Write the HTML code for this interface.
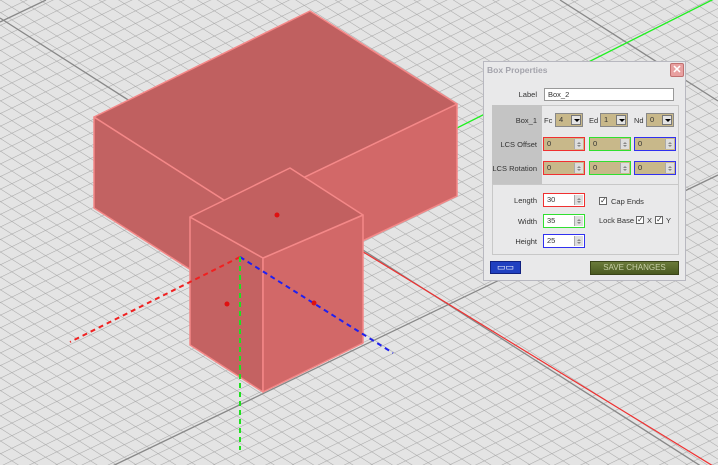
<!DOCTYPE html>
<html><head><meta charset="utf-8"><style>
*{margin:0;padding:0;box-sizing:border-box}
body{width:718px;height:465px;overflow:hidden;background:#e4e4e4;font-family:"Liberation Sans",sans-serif;position:relative}
svg.bg{position:absolute;left:0;top:0}
.dlg{position:absolute;left:483px;top:61px;width:203px;height:220px;background:#e9e9ea;border:1px solid #b8b8c0;font-size:7.5px;color:#333}
.t{position:absolute;white-space:nowrap}
.rt{position:absolute;white-space:nowrap;text-align:right;width:60px}
.ttl{left:3px;top:3px;font-size:8.5px;font-weight:bold;color:#a4a4ac}
.x{position:absolute;left:186px;top:1px;width:14px;height:14px;background:#e8a0a0;border:1px solid #c07070;border-radius:2px;color:#fff;font-size:11px;line-height:12px;text-align:center;font-weight:bold}
.in{position:absolute;background:#fff;border:1px solid #999;height:13px;font-size:7.5px;line-height:11px;padding-left:3px}
.sp{position:absolute;height:14px;background:#c8b88a;border:1px solid #888;font-size:7.5px;line-height:12px;padding-left:3px}
.sp.w{background:#fff}
.sp i{position:absolute;right:1px;top:1px;width:9px;height:10px;background:#ddd;border-left:1px solid #aaa}
.sp i:before{content:"";position:absolute;left:2px;top:1px;border:2px solid transparent;border-bottom:2px solid #888}
.sp i:after{content:"";position:absolute;left:2px;top:6px;border:2px solid transparent;border-top:2px solid #888}
.sel i{background:#e4e4e4;border:1px solid #777;width:10px}
.sel i:before{display:none}
.sel i:after{left:2px;top:3px;border:3px solid transparent;border-top:3px solid #000}
.r{border:1px solid #f03030}.g{border:1px solid #30e030}.b{border:1px solid #3030f0}
.cb{position:absolute;width:8px;height:8px;border:1px solid #666;background:#fff;font-size:8px;line-height:6px;text-align:center}
</style></head><body>
<svg class="bg" width="718" height="465">
<defs><pattern id="gp" width="12.5" height="12.5" patternUnits="userSpaceOnUse" patternTransform="matrix(0.9,0.576,0.9,-0.432,0,0)">
<path d="M0 0H12.5M0 0V12.5" stroke="#a8a8a8" stroke-width="1.2" fill="none"/></pattern></defs>
<rect width="718" height="465" fill="#e4e4e4"/>
<rect width="718" height="465" fill="url(#gp)"/>
<g stroke="#888" stroke-width="1.3">
<line x1="0" y1="18" x2="718" y2="477"/><line x1="560" y1="0" x2="718" y2="101"/>
<line x1="0" y1="22" x2="46" y2="0"/><line x1="0" y1="520" x2="718" y2="175"/>
</g>
<line x1="457" y1="128" x2="718" y2="-3" stroke="#20f020" stroke-width="1.3"/>
<line x1="360" y1="250" x2="718" y2="469" stroke="#f03030" stroke-width="1.2"/>
<g stroke="#f48888" stroke-width="1.5" stroke-linejoin="round">
<polygon points="94,117 238,209 238,300 94,208" fill="#c26262"/>
<polygon points="238,209 457,104 457,196 238,300" fill="#d26868"/>
<polygon points="94,117 310,11 457,104 238,209" fill="#c06060"/>
<polygon points="190,217 263,258 263,392 190,345" fill="#c46262"/>
<polygon points="263,258 363,215 363,343 263,392" fill="#d26868"/>
<polygon points="190,217 290,168 363,215 263,258" fill="#c26060"/>
</g>
<g stroke-width="2" stroke-dasharray="5,4" fill="none">
<line x1="240" y1="257" x2="70" y2="342" stroke="#f02020"/>
<line x1="240" y1="257" x2="393" y2="353" stroke="#2020f0"/>
<line x1="240" y1="257" x2="240" y2="450" stroke="#20e020"/>
</g>
<g fill="#e01010"><circle cx="277" cy="215" r="2.5"/><circle cx="227" cy="304" r="2.5"/><circle cx="314" cy="303" r="2.5"/></g>
</svg>
<div class="dlg">
<div class="t ttl">Box Properties</div><div class="x">✕</div>
<div class="rt" style="left:-7px;top:28px">Label</div>
<div class="in" style="left:60px;top:26px;width:130px">Box_2</div>
<div style="position:absolute;left:8px;top:43px;width:187px;height:150px;border:1px solid #c8c8c8"></div>
<div style="position:absolute;left:8px;top:43px;width:50px;height:79px;background:#c4c4c4"></div>
<div style="position:absolute;left:8px;top:122px;width:187px;height:1px;background:#c8c8c8"></div>
<div class="rt" style="left:-7px;top:54px">Box_1</div>
<div class="t" style="left:60px;top:54px">Fc</div>
<div class="sp sel" style="left:71px;top:51px;width:28px">4<i></i></div>
<div class="t" style="left:105px;top:54px">Ed</div>
<div class="sp sel" style="left:116px;top:51px;width:28px">1<i></i></div>
<div class="t" style="left:150px;top:54px">Nd</div>
<div class="sp sel" style="left:162px;top:51px;width:28px">0<i></i></div>
<div class="rt" style="left:-7px;top:78px">LCS Offset</div>
<div class="sp r" style="left:59px;top:75px;width:42px">0<i></i></div>
<div class="sp g" style="left:105px;top:75px;width:42px">0<i></i></div>
<div class="sp b" style="left:150px;top:75px;width:42px">0<i></i></div>
<div class="rt" style="left:-7px;top:102px">LCS Rotation</div>
<div class="sp r" style="left:59px;top:99px;width:42px">0<i></i></div>
<div class="sp g" style="left:105px;top:99px;width:42px">0<i></i></div>
<div class="sp b" style="left:150px;top:99px;width:42px">0<i></i></div>
<div class="rt" style="left:-7px;top:134px">Length</div>
<div class="sp w r" style="left:59px;top:131px;width:42px">30<i></i></div>
<div class="rt" style="left:-7px;top:155px">Width</div>
<div class="sp w g" style="left:59px;top:152px;width:42px">35<i></i></div>
<div class="rt" style="left:-7px;top:175px">Height</div>
<div class="sp w b" style="left:59px;top:172px;width:42px">25<i></i></div>
<div class="cb" style="left:115px;top:135px">✓</div><div class="t" style="left:127px;top:135px">Cap Ends</div>
<div class="t" style="left:115px;top:154px">Lock Base</div>
<div class="cb" style="left:152px;top:154px">✓</div><div class="t" style="left:163px;top:154px">X</div>
<div class="cb" style="left:171px;top:154px">✓</div><div class="t" style="left:182px;top:154px">Y</div>
<div style="position:absolute;left:6px;top:199px;width:31px;height:13px;background:#2040c0;border:1px solid #102080;color:#fff;font-size:9px;line-height:10px;text-align:center">▭▭</div>
<div style="position:absolute;left:106px;top:199px;width:89px;height:14px;background:linear-gradient(#6a7a3a,#4a5a20);border:1px solid #3a4418;color:#c8d0a8;font-size:8px;line-height:12px;text-align:center">SAVE CHANGES</div>
</div>
</body></html>
